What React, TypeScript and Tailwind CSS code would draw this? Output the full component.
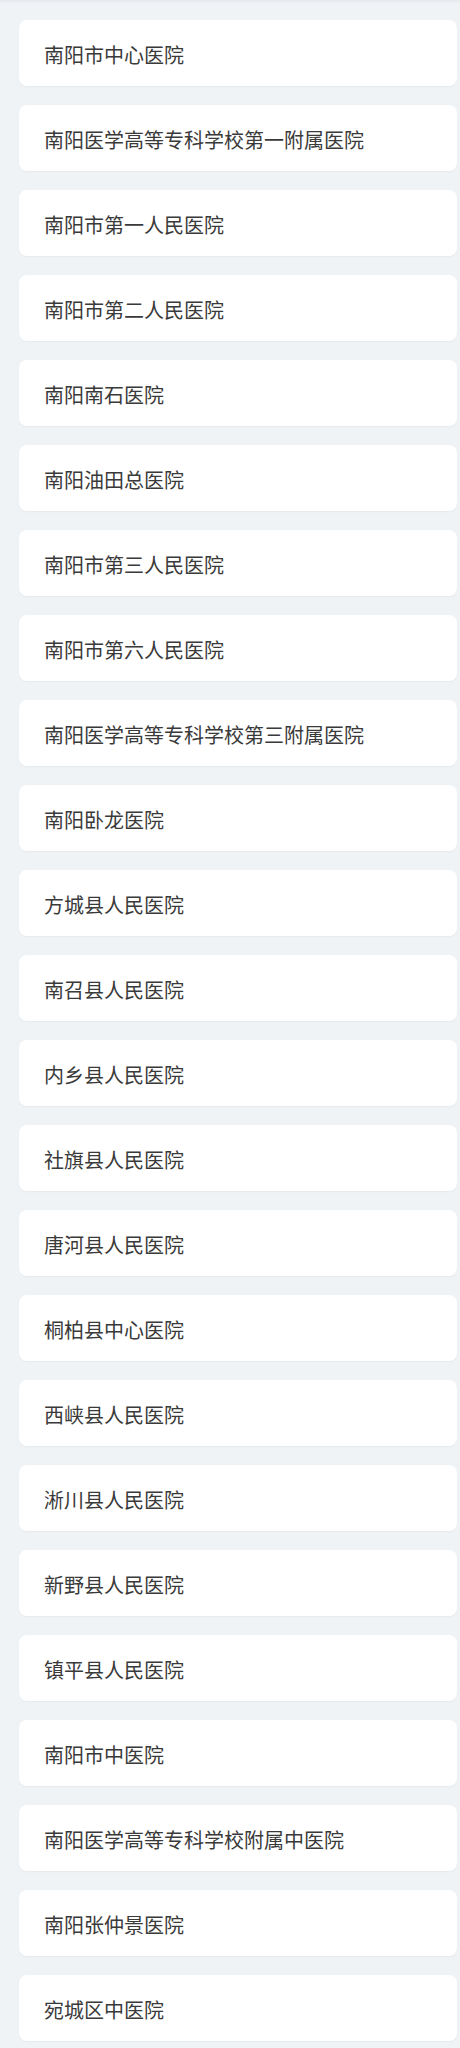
const hospitals = [
  "南阳市中心医院",
  "南阳医学高等专科学校第一附属医院",
  "南阳市第一人民医院",
  "南阳市第二人民医院",
  "南阳南石医院",
  "南阳油田总医院",
  "南阳市第三人民医院",
  "南阳市第六人民医院",
  "南阳医学高等专科学校第三附属医院",
  "南阳卧龙医院",
  "方城县人民医院",
  "南召县人民医院",
  "内乡县人民医院",
  "社旗县人民医院",
  "唐河县人民医院",
  "桐柏县中心医院",
  "西峡县人民医院",
  "淅川县人民医院",
  "新野县人民医院",
  "镇平县人民医院",
  "南阳市中医院",
  "南阳医学高等专科学校附属中医院",
  "南阳张仲景医院",
  "宛城区中医院",
];

export default function App() {
  return (
    <div
      className="min-h-[2048px] bg-[#f0f3f6]"
      style={{ fontFamily: '"Noto Sans CJK SC", "Noto Sans", sans-serif' }}
    >
      <div className="h-[3px] bg-gradient-to-b from-[#e4e8ec] to-[#eef1f4]" />
      <ul className="flex flex-col gap-[19px] pt-[17px] pl-[19px] pr-[3px]">
        {hospitals.map((name) => (
          <li
            key={name}
            className="flex h-[66px] items-center rounded-lg bg-white px-[25px] pt-[3px] text-[20px] text-[#3a3a3a] shadow-[0_1px_2px_rgba(0,0,0,0.04)]"
          >
            {name}
          </li>
        ))}
      </ul>
    </div>
  );
}
